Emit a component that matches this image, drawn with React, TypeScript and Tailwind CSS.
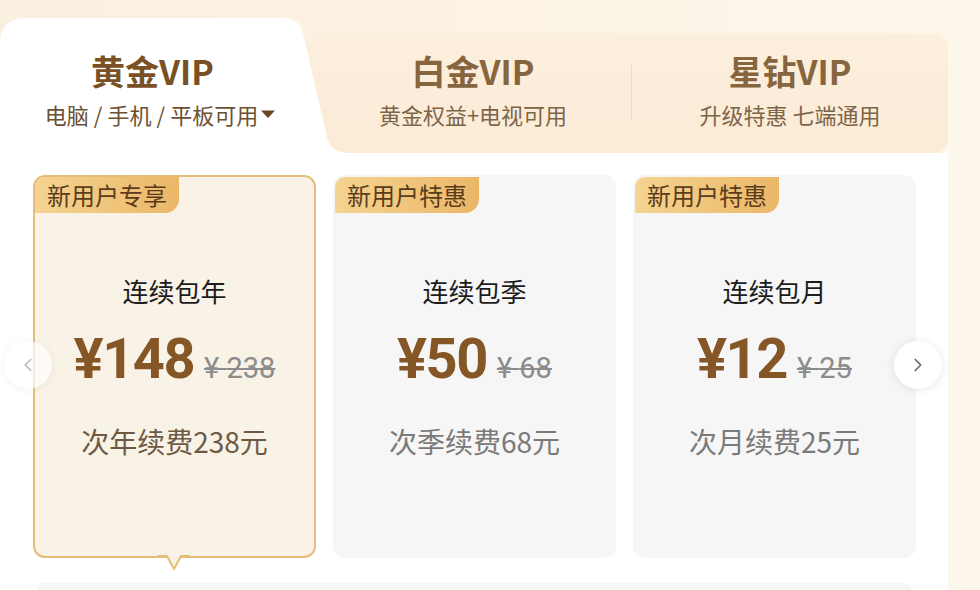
import React from 'react';
import { ChevronLeft, ChevronRight } from 'lucide-react';

type Plan = {
  badge: string;
  title: string;
  price: string;
  original: string;
  renew: string;
  active?: boolean;
};

const plans: Plan[] = [
  { badge: '新用户专享', title: '连续包年', price: '148', original: '238', renew: '次年续费238元', active: true },
  { badge: '新用户特惠', title: '连续包季', price: '50', original: '68', renew: '次季续费68元' },
  { badge: '新用户特惠', title: '连续包月', price: '12', original: '25', renew: '次月续费25元' },
];

const App: React.FC = () => {
  return (
    <div className="w-[980px] h-[590px] overflow-hidden flex flex-col bg-gradient-to-r from-[#faf0df] via-[#fcf3e5] to-[#fdf7ec] font-['Noto_Sans_CJK_SC','Noto_Sans',sans-serif]">
      {/* tabs */}
      <div className="flex h-[153px] w-[948px] shrink-0">
        <div className="relative z-10 w-[305px] h-full">
          <svg className="absolute left-0 top-0" width="350" height="153" viewBox="0 0 350 153">
            <path d="M0 153 L0 44 Q0 18 26 18 L284 18 Q299 18 303 33 L327 137 Q331 153 349 153 Z" fill="#ffffff" />
          </svg>
          <div className="relative flex flex-col items-center pt-[46px]">
            <div className="text-[34px] leading-[50px] font-bold text-[#7a5124]">黄金VIP</div>
            <div className="flex items-center text-[22px] leading-[34px] text-[#6b5132] mt-[1px] pl-[16px]">
              <span>电脑<span className="mx-[5px]">/</span>手机<span className="mx-[5px]">/</span>平板可用</span>
              <svg width="16" height="10" viewBox="0 0 16 10" className="ml-[2px]">
                <path d="M1 1.5 L15 1.5 L8 9 Z" fill="#6b4623" />
              </svg>
            </div>
          </div>
        </div>
        <div className="flex-1 self-end h-[120px] rounded-[14px] bg-gradient-to-b from-[#fcefdd] to-[#fbebd7] flex items-stretch">
          <div className="flex-1 flex flex-col items-center pt-[13px] pl-[10px]">
            <div className="text-[34px] leading-[50px] font-bold text-[#86653f]">白金VIP</div>
            <div className="text-[22px] leading-[34px] text-[#7d6548] mt-[1px]">黄金权益+电视可用</div>
          </div>
          <div className="w-px my-[32px] bg-[#ead9c0]" />
          <div className="flex-1 flex flex-col items-center pt-[13px]">
            <div className="text-[34px] leading-[50px] font-bold text-[#86653f]">星钻VIP</div>
            <div className="text-[22px] leading-[34px] text-[#7d6548] mt-[1px]">升级特惠 七端通用</div>
          </div>
        </div>
      </div>

      {/* plans */}
      <div className="relative flex-1 w-[948px] bg-white flex flex-col">
        <div className="flex gap-[17px] pl-[33px] pt-[22px]">
          {plans.map((p) => (
            <PlanCard key={p.title} plan={p} />
          ))}
        </div>
        <div className="mx-[37px] mt-auto h-[7px] rounded-t-[8px] bg-[#f6f6f6]" />

        <button className="absolute left-[4px] top-[188px] w-[48px] h-[48px] rounded-full bg-white/70 shadow-[0_1px_8px_rgba(0,0,0,0.06)] flex items-center justify-center">
          <ChevronLeft size={22} strokeWidth={1.6} className="text-[#b5b5b5]" />
        </button>
        <button className="absolute left-[894px] top-[188px] w-[48px] h-[48px] rounded-full bg-white shadow-[0_1px_8px_rgba(0,0,0,0.1)] flex items-center justify-center">
          <ChevronRight size={22} strokeWidth={1.8} className="text-[#666666]" />
        </button>
      </div>
    </div>
  );
};

const PlanCard: React.FC<{ plan: Plan }> = ({ plan }) => {
  const box = plan.active
    ? 'bg-[#f9f2e7] border-2 border-[#e6bd78]'
    : 'bg-[#f6f6f6] border-2 border-transparent';
  return (
    <div className="relative w-[283px] h-[383px] shrink-0">
      <div className={`h-full rounded-[12px] flex flex-col items-center ${box}`}>
        <div className="self-start h-[36px] px-[12px] flex items-center rounded-tl-[10px] rounded-br-[14px] bg-gradient-to-r from-[#f4d491] to-[#ebb767] text-[24px] text-[#5a3c1c]">
          {plan.badge}
        </div>
        <div className="mt-[60px] text-[26px] leading-[36px] text-[#1c1c1c]">{plan.title}</div>
        <div className="mt-[18px] flex items-baseline h-[64px]">
          <span className="font-['Roboto',sans-serif] font-bold text-[56px] leading-[64px] tracking-[-1.5px] text-[#855727]">
            ¥{plan.price}
          </span>
          <span className="ml-[10px] font-['Roboto',sans-serif] text-[29px] text-[#8c8c8c] line-through decoration-2">
            ¥ {plan.original}
          </span>
        </div>
        <div className={`mt-[32px] text-[28px] leading-[36px] ${plan.active ? 'text-[#6e5a44]' : 'text-[#7a7a7a]'}`}>
          {plan.renew}
        </div>
      </div>
      {plan.active && (
        <svg className="absolute left-[125px] bottom-[-13px]" width="32" height="16" viewBox="0 0 32 16">
          <rect x="0" y="0" width="32" height="2" fill="#f9f2e7" />
          <path d="M0 1 L9 1 L16 14 L23 1 L32 1" fill="#f9f2e7" stroke="#e6bd78" strokeWidth="2" strokeLinejoin="round" />
        </svg>
      )}
    </div>
  );
};

export default App;
